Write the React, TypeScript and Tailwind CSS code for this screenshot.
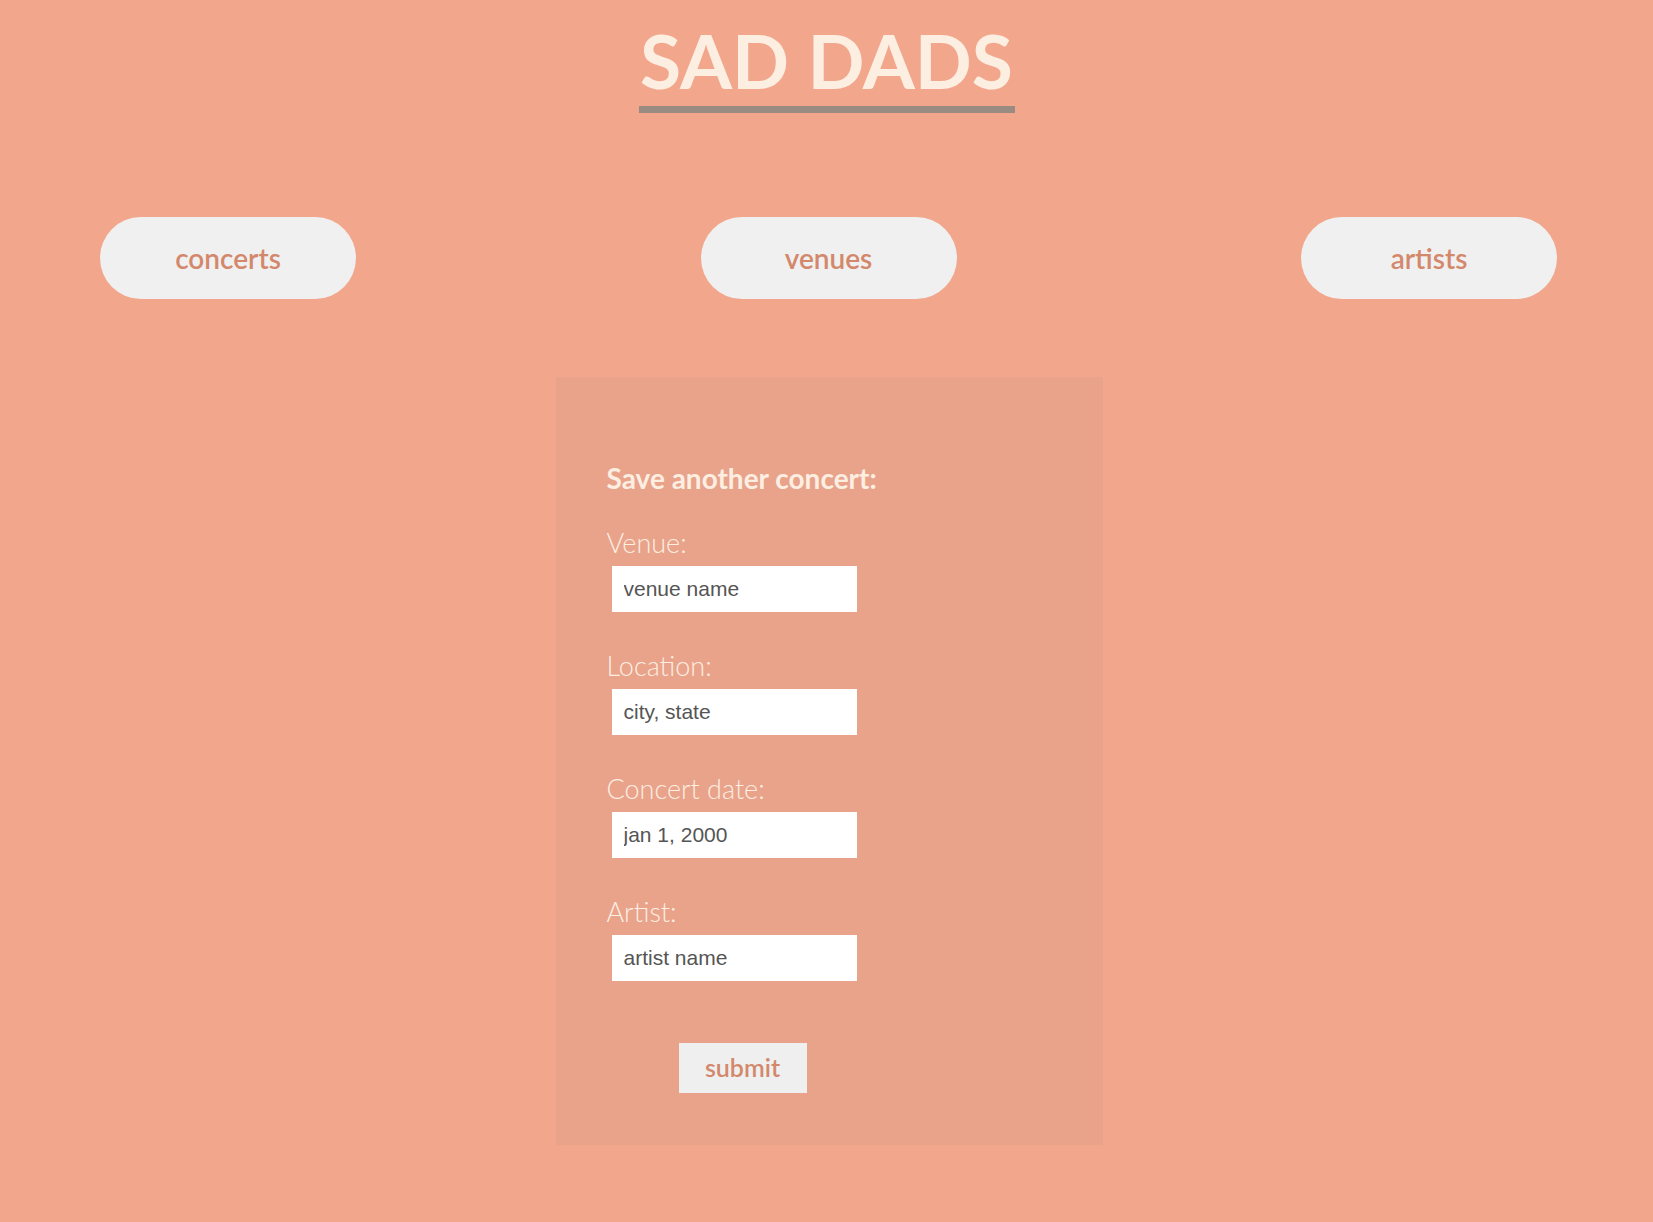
import React from 'react';

const fields = [
  { label: 'Venue:', placeholder: 'venue name' },
  { label: 'Location:', placeholder: 'city, state' },
  { label: 'Concert date:', placeholder: 'jan 1, 2000' },
  { label: 'Artist:', placeholder: 'artist name' },
];

const navItems = ['concerts', 'venues', 'artists'];

export default function App() {
  return (
    <div className="min-h-screen w-full bg-[#f2a68b] font-['Lato','Open_Sans',sans-serif] pb-[76px]">
      <header className="flex justify-center pt-[14px]">
        <h1 className="w-[376px] whitespace-nowrap text-center text-[75px] font-bold leading-[92px] text-[#fdeee2] border-b-[7px] border-[#998a82]">
          SAD DADS
        </h1>
      </header>

      <nav className="flex justify-between pl-[100px] pr-[96px] mt-[104px]">
        {navItems.map((item) => (
          <button
            key={item}
            className="w-[256px] h-[82px] rounded-full bg-[#f0f0f0] text-[28px] font-semibold text-[#d3886c]"
          >
            {item}
          </button>
        ))}
      </nav>

      <div className="flex justify-center pl-[5px] mt-[78px]">
        <main className="w-[547px] bg-[#e8a38a] pl-[51px] pt-[86px] pb-[52px]">
          <form onSubmit={(e) => e.preventDefault()}>
            <h2 className="text-[28px] font-bold leading-[30px] text-[#fdeee2]">Save another concert:</h2>
            <div className="mt-[35px] flex flex-col gap-[39px]">
              {fields.map((f) => (
                <label key={f.label} className="flex flex-col">
                  <span className="text-[27px] font-light leading-[30px] text-[#fdeee2]">{f.label}</span>
                  <input
                    type="text"
                    placeholder={f.placeholder}
                    className="mt-[8px] ml-[5px] w-[245px] h-[46px] bg-white px-[12px] font-['Liberation_Sans',Arial,sans-serif] text-[21px] text-[#555] placeholder:text-[#555] outline-none"
                  />
                </label>
              ))}
            </div>
            <button
              type="submit"
              className="mt-[62px] ml-[72px] w-[128px] h-[50px] bg-[#efefef] text-[25px] font-semibold text-[#d3886c]"
            >
              submit
            </button>
          </form>
        </main>
      </div>
    </div>
  );
}
